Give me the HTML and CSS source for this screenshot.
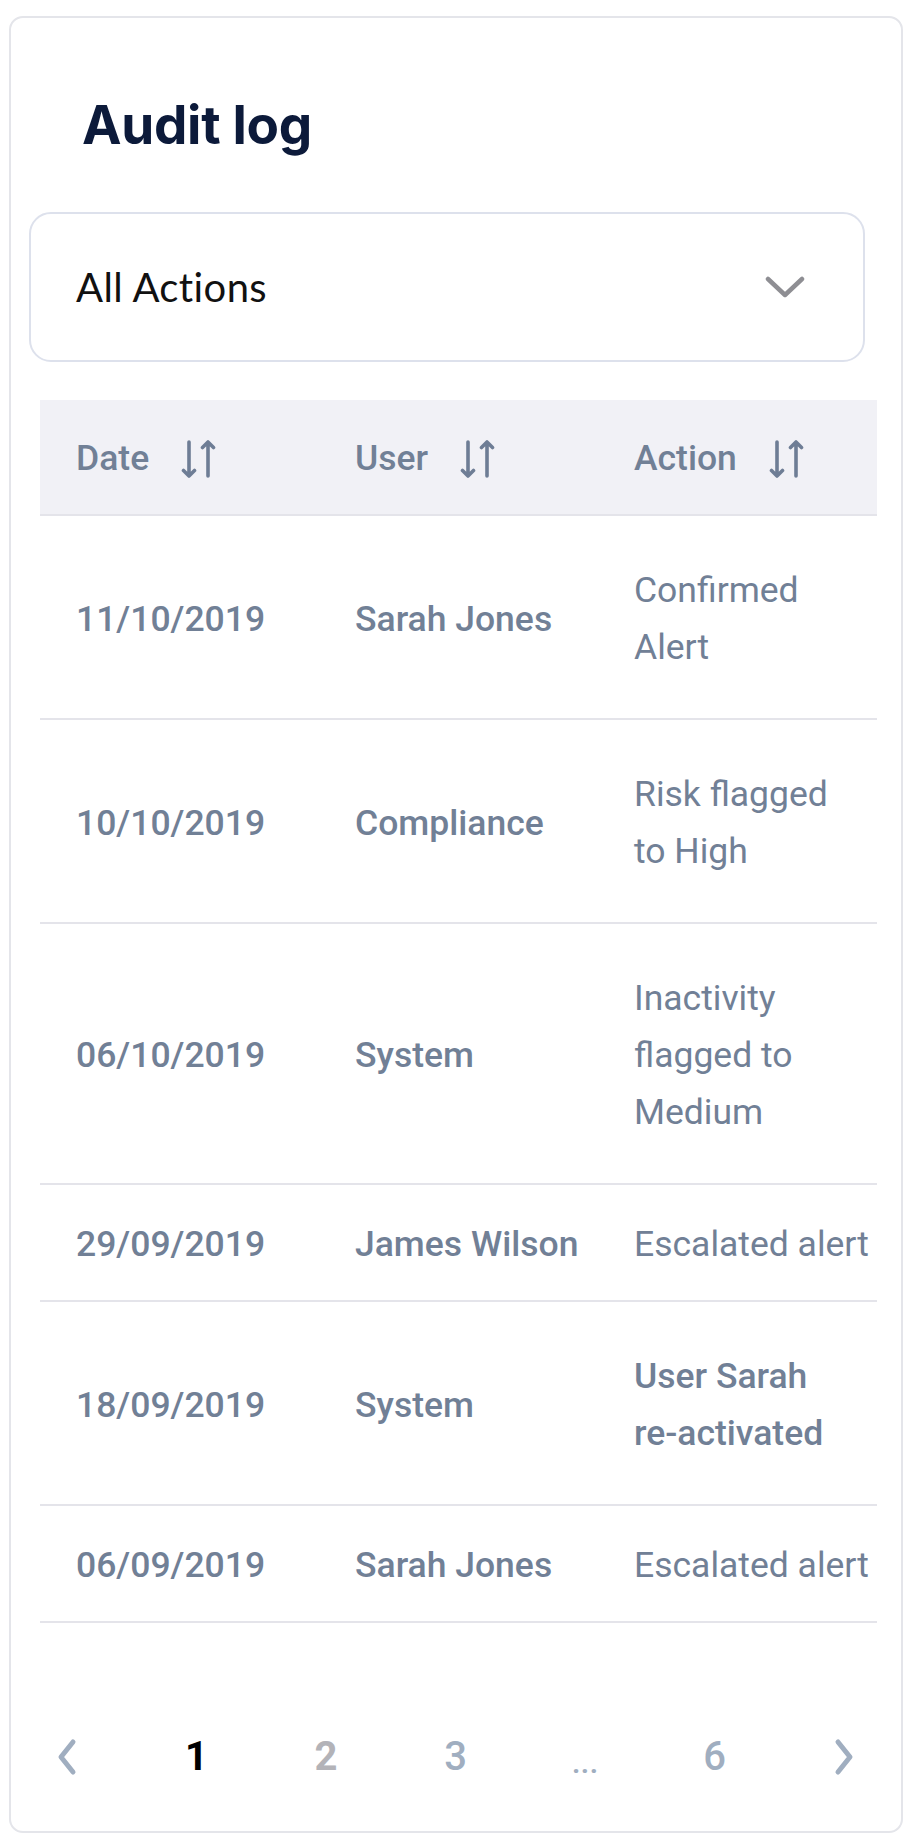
FILE: index.html
```html
<!DOCTYPE html>
<html lang="en">
<head>
<meta charset="utf-8">
<title>Audit log</title>
<link rel="stylesheet" href="styles.css">
</head>
<body>
<section class="card">
  <h1 class="title">Audit log</h1>

  <div class="select">
    <span class="select-label">All Actions</span>
    <svg class="select-chevron" width="40" height="24" viewBox="0 0 40 24" aria-hidden="true">
      <path d="M3 4 L20 20 L37 4" fill="none" stroke="#8e8e93" stroke-width="4.5" stroke-linecap="round" stroke-linejoin="round"/>
    </svg>
  </div>

  <table class="log">
    <thead>
      <tr>
        <th><span class="th-inner">Date <svg class="sort" width="36" height="40" viewBox="0 0 36 40" aria-hidden="true"><path d="M8 3 V37 M2.5 31.5 L8 37 L13.5 31.5 M27 37 V3 M21.5 8.5 L27 3 L32.5 8.5" fill="none" stroke="#6e7d95" stroke-width="3.6" stroke-linecap="round" stroke-linejoin="round"/></svg></span></th>
        <th><span class="th-inner">User <svg class="sort" width="36" height="40" viewBox="0 0 36 40" aria-hidden="true"><path d="M8 3 V37 M2.5 31.5 L8 37 L13.5 31.5 M27 37 V3 M21.5 8.5 L27 3 L32.5 8.5" fill="none" stroke="#6e7d95" stroke-width="3.6" stroke-linecap="round" stroke-linejoin="round"/></svg></span></th>
        <th><span class="th-inner">Action <svg class="sort" width="36" height="40" viewBox="0 0 36 40" aria-hidden="true"><path d="M8 3 V37 M2.5 31.5 L8 37 L13.5 31.5 M27 37 V3 M21.5 8.5 L27 3 L32.5 8.5" fill="none" stroke="#6e7d95" stroke-width="3.6" stroke-linecap="round" stroke-linejoin="round"/></svg></span></th>
      </tr>
    </thead>
    <tbody>
      <tr>
        <td class="strong">11/10/2019</td>
        <td class="strong">Sarah Jones</td>
        <td class="action multi">Confirmed<br>Alert</td>
      </tr>
      <tr>
        <td class="strong">10/10/2019</td>
        <td class="strong">Compliance</td>
        <td class="action multi">Risk flagged<br>to High</td>
      </tr>
      <tr>
        <td class="strong">06/10/2019</td>
        <td class="strong">System</td>
        <td class="action multi">Inactivity<br>flagged to<br>Medium</td>
      </tr>
      <tr>
        <td class="strong">29/09/2019</td>
        <td class="strong">James Wilson</td>
        <td class="action">Escalated alert</td>
      </tr>
      <tr>
        <td class="strong">18/09/2019</td>
        <td class="strong">System</td>
        <td class="action multi strong">User Sarah<br>re-activated</td>
      </tr>
      <tr>
        <td class="strong">06/09/2019</td>
        <td class="strong">Sarah Jones</td>
        <td class="action">Escalated alert</td>
      </tr>
    </tbody>
  </table>

  <nav class="pager">
    <span class="pg pg-arrow"><svg width="24" height="38" viewBox="0 0 24 38" aria-hidden="true"><path d="M18 4 L6 19 L18 34" fill="none" stroke="#a0aec0" stroke-width="5" stroke-linecap="round" stroke-linejoin="round"/></svg></span>
    <span class="pg pg-current">1</span>
    <span class="pg pg-gray">2</span>
    <span class="pg pg-muted">3</span>
    <span class="pg pg-dots">...</span>
    <span class="pg pg-muted">6</span>
    <span class="pg pg-arrow"><svg width="24" height="38" viewBox="0 0 24 38" aria-hidden="true"><path d="M6 4 L18 19 L6 34" fill="none" stroke="#a0aec0" stroke-width="5" stroke-linecap="round" stroke-linejoin="round"/></svg></span>
  </nav>
</section>
</body>
</html>
```

FILE: styles.css
```css
* { box-sizing: border-box; }

html, body {
  margin: 0;
  padding: 0;
  background: #ffffff;
}

body {
  padding: 16px 0 0 9px;
  font-family: Roboto, "Liberation Sans", sans-serif;
}

.card {
  width: 894px;
  border: 2px solid #e4e5ea;
  border-radius: 14px;
  padding: 75px 0 49px 0;
  background: #ffffff;
}

.title {
  margin: 0 0 0 71px;
  font-family: Inter, "Liberation Sans", sans-serif;
  font-weight: 700;
  font-size: 53px;
  line-height: 64px;
  letter-spacing: -0.3px;
  color: #0c1a3a;
}

.select {
  margin: 55px 0 0 18px;
  width: 836px;
  height: 150px;
  border: 2px solid #dde1ec;
  border-radius: 22px;
  display: flex;
  align-items: center;
  justify-content: space-between;
  padding: 0 58px 0 45px;
}

.select-label {
  font-family: Lato, "Liberation Sans", sans-serif;
  font-size: 40px;
  letter-spacing: 0.4px;
  color: #111111;
}

.select-chevron { display: block; }

.log {
  margin: 38px 0 0 29px;
  width: 837px;
  border-collapse: collapse;
  table-layout: fixed;
}

.log th,
.log td {
  text-align: left;
  padding: 31px 0 27px 36px;
  font-size: 35.5px;
  line-height: 57px;
  color: #718096;
  border-bottom: 2px solid #e4e4ea;
  vertical-align: middle;
}

.log th {
  background: #f1f1f6;
  font-weight: 500;
  padding: 30px 0 27px 36px;
}

.th-inner {
  display: inline-flex;
  align-items: center;
  gap: 32px;
}

.sort { display: block; }

.log td { font-weight: 400; }
.log td.strong { font-weight: 500; }
.log td.action { white-space: nowrap; }
.log td.multi { padding-top: 46px; padding-bottom: 42px; }

.pager {
  margin-top: 109px;
  padding-left: 34px;
  display: flex;
  align-items: center;
  gap: 85.5px;
}

.pg {
  width: 44px;
  height: 50px;
  display: flex;
  align-items: center;
  justify-content: center;
  font-size: 40px;
  line-height: 50px;
  font-weight: 500;
}

.pg-current { color: #000000; font-weight: 700; }
.pg-gray { color: #b3b3b8; font-weight: 700; }
.pg-muted { color: #a0aec0; }
.pg-dots { color: #a0aec0; font-size: 32px; padding-top: 10px; }
.pg-arrow svg { display: block; }
```
